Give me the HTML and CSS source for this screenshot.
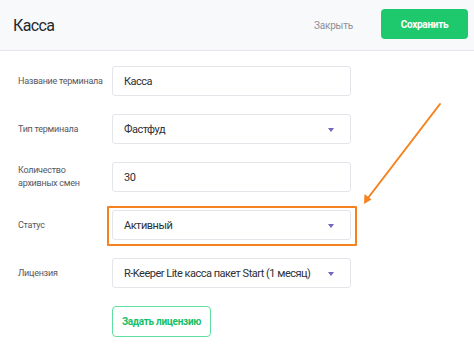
FILE: index.html
```html
<!DOCTYPE html>
<html lang="ru">
<head>
<meta charset="utf-8">
<link rel="stylesheet" href="styles.css">
</head>
<body>
<div class="page">
  <header class="header">
    <h1 class="title">Касса</h1>
    <div class="actions">
      <button class="btn-close">Закрыть</button>
      <button class="btn-save">Сохранить</button>
    </div>
  </header>
  <form class="form">
    <div class="row">
      <label class="label">Название терминала</label>
      <div class="field">Касса</div>
    </div>
    <div class="row">
      <label class="label">Тип терминала</label>
      <div class="field select">Фастфуд<span class="caret"></span></div>
    </div>
    <div class="row">
      <label class="label">Количество<br>архивных смен</label>
      <div class="field">30</div>
    </div>
    <div class="row">
      <label class="label">Статус</label>
      <div class="field select highlighted">Активный<span class="caret"></span><span class="hl-box"></span></div>
    </div>
    <div class="row">
      <label class="label">Лицензия</label>
      <div class="field select">R-Keeper Lite касса пакет Start (1 месяц)<span class="caret"></span></div>
    </div>
    <div class="row">
      <span class="label"></span>
      <button type="button" class="btn-license">Задать лицензию</button>
    </div>
  </form>
  <svg class="arrow" width="474" height="351" viewBox="0 0 474 351">
    <line x1="440" y1="104" x2="368" y2="198" stroke="#f5821f" stroke-width="2" stroke-linecap="round"/>
    <polygon points="364,204 364.5,194 371.5,199.5" fill="#f5821f"/>
  </svg>
</div>
</body>
</html>
```
FILE: styles.css
```css
* { box-sizing: border-box; }
html, body { margin: 0; padding: 0; background: #fff; }
body { font-family: Roboto, "Noto Sans", sans-serif; color: #2b2d33; }
.page { position: relative; width: 474px; height: 351px; overflow: hidden; }
.header {
  height: 51px;
  background: #f8f9fb;
  border-bottom: 1px solid #e4e6ea;
  display: flex;
  align-items: center;
  justify-content: space-between;
  padding: 0 6px 0 13px;
}
.title { margin: 0; font-size: 16px; font-weight: 400; color: #25272c; letter-spacing: -0.6px; }
.actions { display: flex; align-items: center; gap: 28px; }
.btn-close {
  border: 0; background: none; padding: 0;
  font-family: inherit; font-size: 10px; letter-spacing: -0.2px; color: #8d9098;
  white-space: nowrap;
}
.btn-save {
  width: 87px; height: 30px;
  border: 0; border-radius: 4px;
  background: #1ec96e; color: #fff;
  font-family: inherit; font-size: 10px; font-weight: 700; letter-spacing: -0.3px;
  margin-top: -2px;
  white-space: nowrap;
}
.form { padding: 15px 0 0 0; display: flex; flex-direction: column; gap: 18px; }
.row { display: grid; grid-template-columns: 112px 239px; align-items: center; }
.label { padding-left: 18px; font-size: 9px; letter-spacing: -0.25px; line-height: 13px; color: #55585f; white-space: nowrap; }
.field {
  position: relative;
  height: 30px;
  border: 1px solid #e3e5ea;
  border-radius: 3px;
  padding: 0 11px;
  display: flex; align-items: center;
  font-size: 11px; letter-spacing: -0.5px; color: #2e3036;
  background: #fff;
  white-space: nowrap;
}
.caret {
  position: absolute; right: 16px; top: 13px;
  width: 0; height: 0;
  border-left: 3.5px solid transparent;
  border-right: 3.5px solid transparent;
  border-top: 4px solid #6e66b8;
}
.hl-box {
  position: absolute; left: -6px; right: -7px; top: -5px; bottom: -7px;
  border: 2px solid #f5821f;
  border-radius: 1px;
  pointer-events: none;
}
.btn-license {
  width: 99px; height: 31px;
  border: 1px solid #5fe0a0; border-radius: 4px;
  background: #fff; color: #16c06a;
  font-family: inherit; font-size: 10px; font-weight: 700; letter-spacing: -0.3px;
  padding: 0;
  white-space: nowrap;
}
.arrow { position: absolute; left: 0; top: 0; pointer-events: none; }
```
